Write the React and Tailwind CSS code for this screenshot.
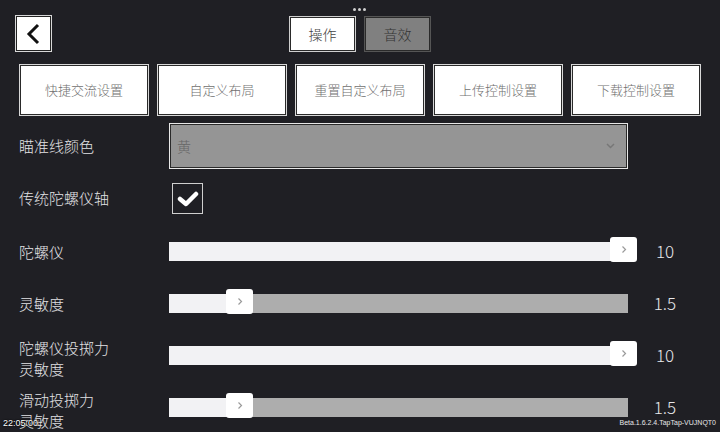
import React from "react";

const FONT = { fontFamily: '"Noto Sans CJK SC", "Noto Sans", sans-serif' };

const buttons = ["快捷交流设置", "自定义布局", "重置自定义布局", "上传控制设置", "下载控制设置"];

const sliders = [
  { label: ["陀螺仪"], value: "10", handle: 441, fill: 459 },
  { label: ["灵敏度"], value: "1.5", handle: 57, fill: 72 },
  { label: ["陀螺仪投掷力", "灵敏度"], value: "10", handle: 441, fill: 459 },
  { label: ["滑动投掷力", "灵敏度"], value: "1.5", handle: 57, fill: 72 },
];

function Handle({ left }) {
  return (
    <div
      className="absolute top-[-5px] w-[27px] h-[25px] bg-white rounded-[3px] flex items-center justify-center"
      style={{ left }}
    >
      <svg width="6" height="9" viewBox="0 0 6 9">
        <path d="M1.5 1.5 L4.5 4.5 L1.5 7.5" fill="none" stroke="#9a9a9a" strokeWidth="1.2" />
      </svg>
    </div>
  );
}

function SliderRow({ s }) {
  const multi = s.label.length > 1;
  return (
    <div className="flex items-center h-[52px]">
      <div
        className={
          multi
            ? "w-[169px] pl-[19px] pt-[5px] text-[15px] leading-[21px] font-light text-[#e2e2e4]"
            : "w-[169px] pl-[19px] text-[15px] leading-[21px] font-light text-[#e2e2e4]"
        }
      >
        {s.label.map((l) => (
          <div key={l}>{l}</div>
        ))}
      </div>
      <div className="relative w-[459px] h-[19px] bg-[#adadad]">
        <div className="absolute left-0 top-0 h-full bg-[#f2f2f4]" style={{ width: s.fill }} />
        <Handle left={s.handle} />
      </div>
      <div className="w-[74px] text-center text-[17px] font-light text-[#e8e8ea]">{s.value}</div>
    </div>
  );
}

export default function App() {
  return (
    <div className="relative w-[720px] h-[432px] overflow-hidden bg-[#1f1f24]" style={FONT}>
      {/* dots */}
      <div className="absolute left-[353px] top-[8px] flex gap-[2px]">
        <div className="w-[3px] h-[3px] rounded-full bg-[#d0d0d0]" />
        <div className="w-[3px] h-[3px] rounded-full bg-[#d0d0d0]" />
        <div className="w-[3px] h-[3px] rounded-full bg-[#d0d0d0]" />
      </div>

      {/* top row */}
      <div className="flex items-center pt-[15px] pl-[15px]">
        <div className="w-[37px] h-[37px] bg-white border border-[#d8d8d8] shadow-[inset_0_0_0_1px_#222] flex items-center justify-center">
          <svg width="20" height="22" viewBox="0 0 20 22">
            <path d="M14 2 L5 11 L14 20" fill="none" stroke="#111" strokeWidth="3" />
          </svg>
        </div>
        <div className="ml-[237px] flex gap-[8px] mt-[1px]">
          <div className="w-[67px] h-[36px] bg-white border border-[#cfcfcf] shadow-[inset_0_0_0_1px_#2a2a2a] flex items-center justify-center text-[14px] font-light text-[#444]">
            操作
          </div>
          <div className="w-[67px] h-[36px] bg-[#808080] border border-[#555] shadow-[inset_0_0_0_1px_#2a2a2a] flex items-center justify-center text-[14px] font-light text-[#333]">
            音效
          </div>
        </div>
      </div>

      {/* buttons row */}
      <div className="flex gap-[8px] pl-[19px] mt-[12px]">
        {buttons.map((b) => (
          <div
            key={b}
            className="w-[130px] h-[52px] bg-white border border-[#d8d8d8] shadow-[inset_0_0_0_1px_#2a2a2a] flex items-center justify-center text-[13px] font-light text-[#707070]"
          >
            {b}
          </div>
        ))}
      </div>

      {/* crosshair color */}
      <div className="flex items-center mt-[7px] h-[46px]">
        <div className="w-[169px] pl-[19px] text-[15px] font-light text-[#e2e2e4]">瞄准线颜色</div>
        <div className="w-[459px] h-[46px] bg-[#959595] border border-[#e8e8e8] shadow-[inset_0_0_0_1px_#2a2a2a] flex items-center justify-between pl-[7px] pr-[12px]">
          <span className="text-[14px] font-light text-[#666]">黄</span>
          <svg width="9" height="6" viewBox="0 0 9 6">
            <path d="M1 1 L4.5 4.5 L8 1" fill="none" stroke="#777" strokeWidth="1.5" />
          </svg>
        </div>
      </div>

      {/* checkbox */}
      <div className="flex items-center mt-[14px] h-[31px]">
        <div className="w-[172px] pl-[19px] text-[15px] font-light text-[#e2e2e4]">传统陀螺仪轴</div>
        <div className="w-[31px] h-[31px] bg-[#1f1f24] border border-[#cfcfcf] flex items-center justify-center">
          <svg width="22" height="16" viewBox="0 0 22 16">
            <path d="M3 8 L9 13 L19 3" fill="none" stroke="#fff" strokeWidth="4.5" strokeLinejoin="round" strokeLinecap="round" />
          </svg>
        </div>
      </div>

      {/* sliders */}
      <div className="mt-[11px]">
        {sliders.map((s, i) => (
          <SliderRow key={i} s={s} />
        ))}
      </div>

      {/* footers */}
      <div
        className="absolute left-[3px] bottom-[2px] text-[9px] text-white"
        style={{ fontFamily: '"Liberation Sans", sans-serif', textShadow: "0 0 2px #000, 0 0 1px #000" }}
      >
        22:05:00
      </div>
      <div
        className="absolute right-[4px] bottom-[4px] text-[7px] text-[#e8e8e8]"
        style={{ fontFamily: '"Liberation Sans", sans-serif' }}
      >
        Beta.1.6.2.4.TapTap-VUJNQT0
      </div>
    </div>
  );
}
